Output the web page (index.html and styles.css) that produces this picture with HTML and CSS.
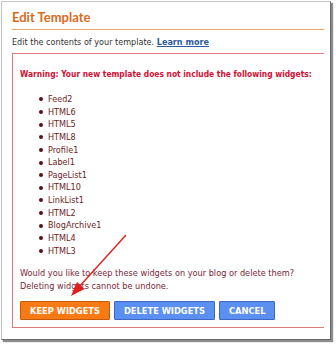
FILE: index.html
```html
<!DOCTYPE html>
<html>
<head>
<meta charset="utf-8">
<link rel="stylesheet" href="styles.css">
</head>
<body>
<div class="frame">
  <h1 class="title">Edit Template</h1>
  <p class="intro">Edit the contents of your template. <a href="#" class="learn">Learn more</a></p>
  <div class="warnbox">
    <p class="warning">Warning: Your new template does not include the following widgets:</p>
    <ul class="widgets">
      <li>Feed2</li>
      <li>HTML6</li>
      <li>HTML5</li>
      <li>HTML8</li>
      <li>Profile1</li>
      <li>Label1</li>
      <li>PageList1</li>
      <li>HTML10</li>
      <li>LinkList1</li>
      <li>HTML2</li>
      <li>BlogArchive1</li>
      <li>HTML4</li>
      <li>HTML3</li>
    </ul>
    <p class="question">Would you like to keep these widgets on your blog or delete them?<br>Deleting widgets cannot be undone.</p>
    <div class="actions">
      <button class="btn btn-keep">KEEP WIDGETS</button>
      <button class="btn btn-blue">DELETE WIDGETS</button>
      <button class="btn btn-blue">CANCEL</button>
    </div>
  </div>
  <svg class="arrow" width="336" height="345" viewBox="0 0 336 345">
    <line x1="126" y1="235" x2="78" y2="288" stroke="#e0201c" stroke-width="1.4"/>
    <polygon points="71,296 84.5,289 77,282" fill="#e0201c"/>
  </svg>
</div>
</body>
</html>
```

FILE: styles.css
```css
html, body {
  margin: 0;
  padding: 0;
  background: #ffffff;
}

body {
  width: 336px;
  height: 345px;
  overflow: hidden;
  font-family: "DejaVu Sans Condensed", "DejaVu Sans", Verdana, sans-serif;
  font-stretch: semi-condensed;
}

.frame {
  margin: 1px 0 0 1px;
  width: 330px;
  height: 339px;
  box-sizing: border-box;
  border: 1px solid #c4c4c4;
  border-right-color: #6a6a6a;
  border-bottom-color: #6a6a6a;
  box-shadow: 2px 2px 1px rgba(0, 0, 0, 0.45);
  padding: 8px 0 0 10px;
  background: #fff;
}

.title {
  margin: 0;
  width: 312px;
  font-family: Lato, "Liberation Sans", sans-serif;
  font-stretch: normal;
  font-weight: bold;
  font-size: 13px;
  line-height: 15px;
  color: #da6a1c;
  padding-bottom: 4px;
  border-bottom: 1px solid #f1a56b;
}

.intro {
  margin: 6px 0 0 0;
  font-size: 9px;
  line-height: 12px;
  color: #333;
}

.learn {
  color: #2f5a9e;
  font-weight: bold;
  text-decoration: underline;
}

.warnbox {
  margin-top: 5px;
  width: 312px;
  box-sizing: border-box;
  border: 1px solid #e07a7a;
  border-right: none;
  padding: 14px 0 7px 7px;
}

.warning {
  margin: 0;
  font-size: 8.4px;
  font-weight: bold;
  line-height: 13px;
  color: #d10f33;
  white-space: nowrap;
}

.widgets {
  list-style: none;
  margin: 12px 0 0 19px;
  padding: 0;
  font-size: 9px;
  line-height: 12.64px;
  color: #6e1c22;
}

.widgets li {
  display: flex;
  align-items: center;
}

.widgets li::before {
  content: "";
  width: 4px;
  height: 4px;
  border-radius: 50%;
  background: #5a1016;
  margin-right: 5px;
  flex: none;
}

.question {
  margin: 10px 0 0 0;
  font-size: 9.1px;
  line-height: 12.4px;
  color: #7a2638;
}

.actions {
  margin-top: 9px;
  display: flex;
  gap: 4px;
}

.btn {
  height: 19px;
  padding: 0 9px;
  margin: 0;
  font-family: "DejaVu Sans", Verdana, sans-serif;
  font-stretch: normal;
  font-weight: bold;
  font-size: 8.3px;
  color: #fff;
  border-radius: 1px;
  cursor: pointer;
}

.btn-keep {
  background: #f97a14;
  border: 1px solid #c35a08;
}

.btn-blue {
  background: #5b8ff2;
  border: 1px solid #3d67c2;
}

.arrow {
  position: absolute;
  left: 0;
  top: 0;
  pointer-events: none;
}
```
